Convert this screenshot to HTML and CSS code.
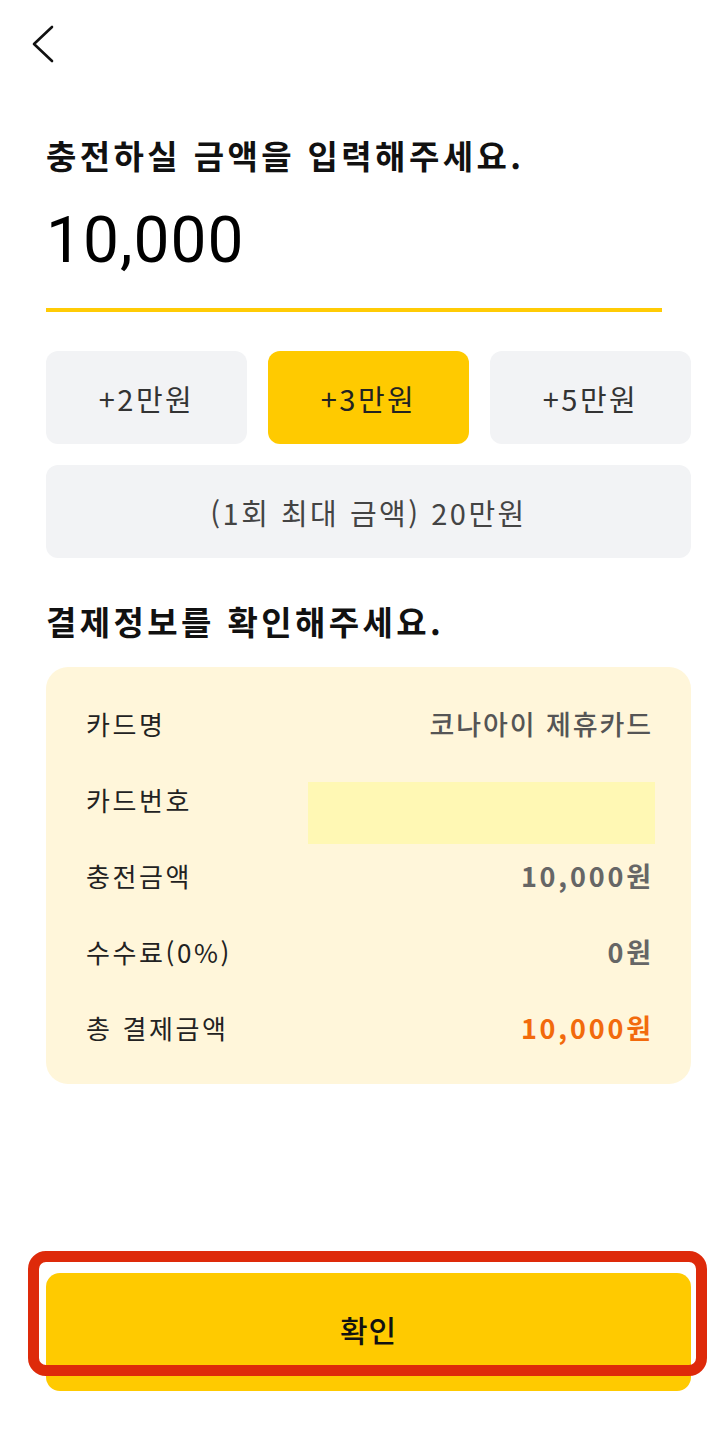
FILE: index.html
```html
<!DOCTYPE html>
<html lang="ko">
<head>
    <meta charset="UTF-8">
    <meta name="viewport" content="width=device-width, initial-scale=1.0">
    <title>충전</title>
    <link rel="stylesheet" href="styles.css">
</head>
<body>

    <div class="top-bar">
        <svg class="back" width="30" height="40" viewBox="0 0 30 40">
            <path d="M23 3 L5 20 L23 37" fill="none" stroke="#111" stroke-width="2.6" stroke-linecap="round" stroke-linejoin="round"/>
        </svg>
    </div>

    <div class="page">
        <h1 class="title">충전하실 금액을 입력해주세요.</h1>
        <div class="amount">10,000</div>
        <div class="amount-line"></div>

        <div class="quick">
            <button class="chip">+2만원</button>
            <button class="chip active">+3만원</button>
            <button class="chip">+5만원</button>
        </div>
        <div class="limit">(1회 최대 금액) 20만원</div>

        <h2 class="title sub">결제정보를 확인해주세요.</h2>

        <div class="card">
            <div class="row">
                <span class="label">카드명</span>
                <span class="value plain">코나아이 제휴카드</span>
            </div>
            <div class="row">
                <span class="label">카드번호</span>
                <span class="card-no"></span>
            </div>
            <div class="row">
                <span class="label">충전금액</span>
                <span class="value">10,000원</span>
            </div>
            <div class="row">
                <span class="label">수수료(0%)</span>
                <span class="value">0원</span>
            </div>
            <div class="row">
                <span class="label">총 결제금액</span>
                <span class="value total">10,000원</span>
            </div>
        </div>

        <div class="confirm-wrap">
            <button class="confirm">확인</button>
            <div class="mark"></div>
        </div>
    </div>

</body>
</html>
```

FILE: styles.css
```css
body {
    margin: 0;
    background: #fff;
    color: #111;
    font-family: "Noto Sans CJK KR", "Noto Sans", sans-serif;
}

.top-bar {
    height: 88px;
    padding-left: 29px;
    box-sizing: border-box;
    padding-top: 24px;
}

.back {
    display: block;
}

.page {
    padding: 0 26px 0 46px;
}

.title {
    margin: 47px 0 0;
    font-size: 33px;
    line-height: 40px;
    font-weight: 700;
    letter-spacing: 3.4px;
    color: #111;
}

.amount {
    margin-top: 28px;
    font-family: Roboto, "Noto Sans", sans-serif;
    font-size: 64px;
    line-height: 76px;
    letter-spacing: 1px;
    color: #000;
}

.amount-line {
    margin-top: 29px;
    width: 616px;
    height: 4px;
    background: #ffcb05;
}

.quick {
    margin-top: 39px;
    display: grid;
    grid-template-columns: repeat(3, 1fr);
    gap: 21px;
}

.chip,
.limit {
    height: 93px;
    border: none;
    border-radius: 12px;
    background: #f2f3f5;
    color: #333;
    font-family: inherit;
    font-size: 29px;
    letter-spacing: 2.5px;
    display: flex;
    align-items: center;
    justify-content: center;
    padding: 0;
}

.chip.active {
    background: #ffca00;
    color: #222;
}

.limit {
    margin-top: 21px;
    color: #444;
}

.sub {
    margin-top: 43px;
}

.card {
    margin-top: 26px;
    background: #fff6da;
    border-radius: 22px;
    padding: 18px 40px 19px 40px;
}

.row {
    height: 76px;
    display: flex;
    align-items: center;
    justify-content: space-between;
}

.label {
    font-size: 26px;
    letter-spacing: 2.6px;
    color: #222;
}

.value {
    font-size: 27px;
    font-weight: 700;
    letter-spacing: 2.8px;
    margin-right: -2.8px;
    color: #666;
}

.value.plain {
    font-weight: 500;
    letter-spacing: 1.9px;
    margin-right: -1.9px;
    color: #555;
}

.value.total {
    color: #f26a0c;
}

.card-no {
    align-self: flex-start;
    margin: 21px -4px 0 0;
    width: 347px;
    height: 62px;
    background: #fff8b4;
}

.confirm-wrap {
    position: relative;
    margin-top: 189px;
}

.confirm {
    display: block;
    width: 100%;
    height: 118px;
    border: none;
    border-radius: 14px;
    background: #ffca00;
    color: #111;
    font-family: inherit;
    font-size: 30px;
    font-weight: 500;
    letter-spacing: 1px;
    padding-bottom: 8px;
}

.mark {
    position: absolute;
    left: -18px;
    top: -22px;
    width: 679px;
    height: 125px;
    box-sizing: border-box;
    border: 11px solid #de2a0a;
    border-radius: 18px;
}
```
